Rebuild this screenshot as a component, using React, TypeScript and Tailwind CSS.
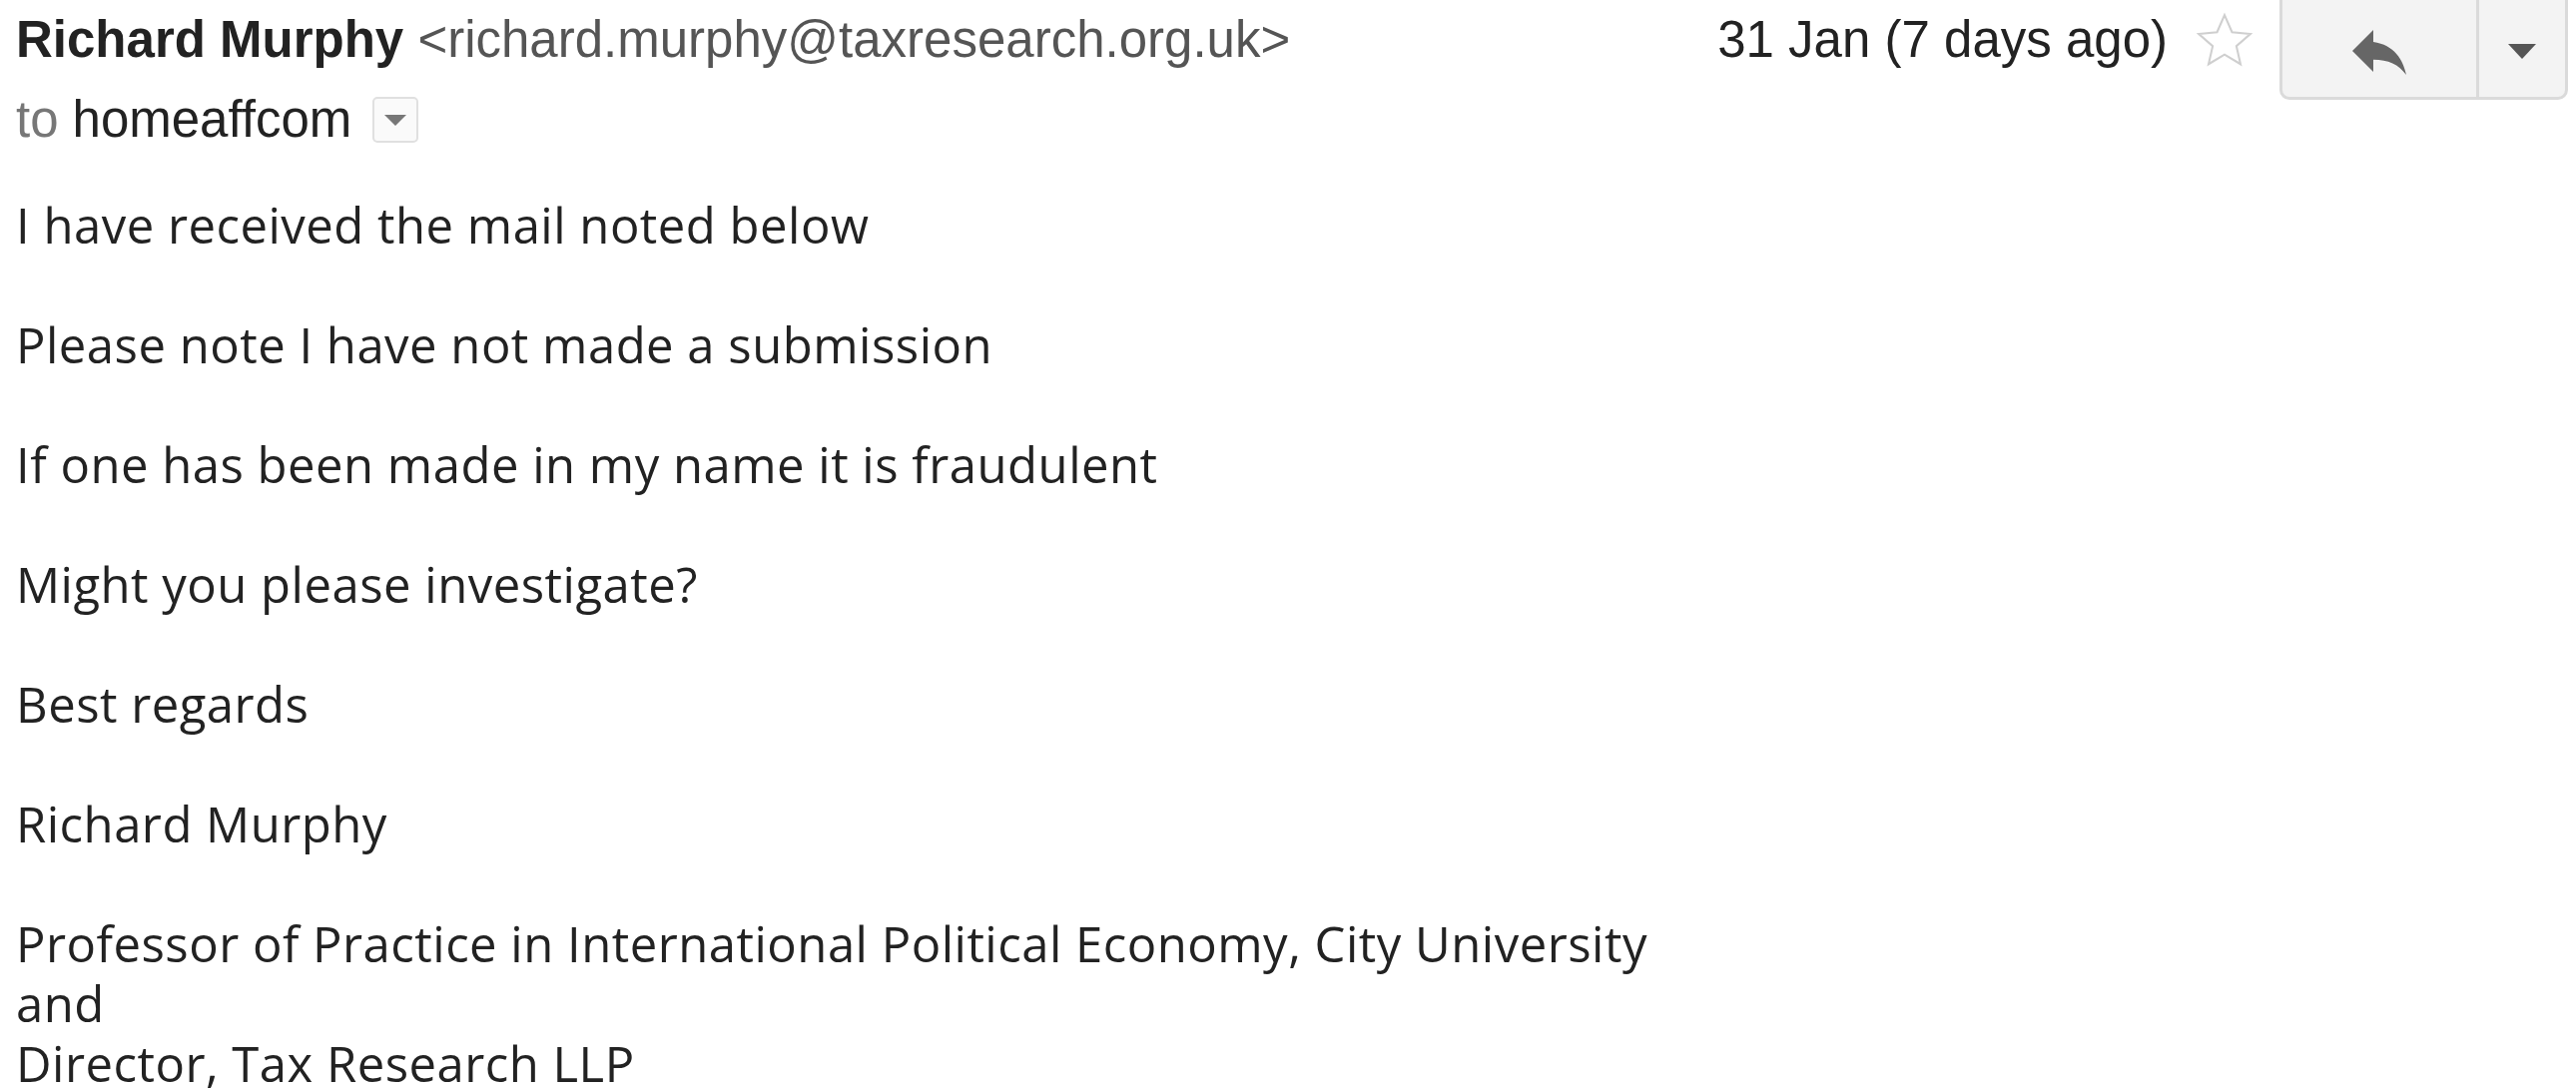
import React from "react";

// Gmail-style single message view (zoomed screenshot)
function Star() {
  return (
    <svg width="62" height="62" viewBox="0 0 24 24" className="shrink-0">
      <polygon
        points="12,2 14.9,8.6 22,9.3 16.6,14 18.2,21 12,17.3 5.8,21 7.4,14 2,9.3 9.1,8.6"
        fill="none"
        stroke="#cfcfcf"
        strokeWidth="0.8"
        strokeLinejoin="miter"
      />
    </svg>
  );
}

function ReplyIcon() {
  return (
    <svg width="72" height="72" viewBox="0 0 24 24">
      <path d="M10 9V5l-7 7 7 7v-4.1c5 0 8.5 1.6 11 5.1-1-5-4-10-11-11z" fill="#666" />
    </svg>
  );
}

const body: string[][] = [
  ["I have received the mail noted below"],
  ["Please note I have not made a submission"],
  ["If one has been made in my name it is fraudulent"],
  ["Might you please investigate?"],
  ["Best regards"],
  ["Richard Murphy"],
  [
    "Professor of Practice in International Political Economy, City University",
    "and",
    "Director, Tax Research LLP",
  ],
];

export default function App() {
  return (
    <div className="min-h-screen overflow-hidden bg-white">
      <div className="flex items-start justify-between pl-[16px] pr-[8px] font-['Liberation_Sans',Arial,sans-serif] text-[51px]">
        <div className="flex flex-col">
          <div className="whitespace-nowrap leading-[80px]">
            <span className="font-bold text-[#222]">Richard Murphy</span>{" "}
            <span className="text-[#555]">&lt;richard.murphy@taxresearch.org.uk&gt;</span>
          </div>
          <div className="flex items-center whitespace-nowrap leading-[80px]">
            <span className="text-[#777]">to</span>
            <span className="ml-[14px] text-[#222]">homeaffcom</span>
            <span className="ml-[21px] flex h-[46px] w-[46px] items-center justify-center rounded-[5px] border-2 border-[#e0e0e0] bg-[#fafafa]">
              <span className="h-0 w-0 border-x-[11px] border-t-[11px] border-x-transparent border-t-[#777]" />
            </span>
          </div>
        </div>

        <div className="flex items-start">
          <span className="whitespace-nowrap leading-[80px] text-[#222]">31 Jan (7 days ago)</span>
          <span className="ml-[26px] mt-[10px]">
            <Star />
          </span>
          <div className="-mt-[10px] ml-[24px] flex h-[110px] overflow-hidden rounded-b-[10px] border-[3px] border-[#dadada] bg-[#f3f3f3]">
            <button type="button" className="flex w-[194px] items-center justify-center pt-[12px]">
              <ReplyIcon />
            </button>
            <div className="w-[3px] bg-[#dadada]" />
            <button type="button" className="flex w-[86px] items-center justify-center pt-[12px]">
              <span className="h-0 w-0 border-x-[14px] border-t-[15px] border-x-transparent border-t-[#555]" />
            </button>
          </div>
        </div>
      </div>

      <div className="mt-[35px] pl-[16px] font-['Open_Sans',sans-serif] text-[49px] leading-[60px] tracking-[0.5px] text-[#222]">
        {body.map((p, i) => (
          <p key={i} className="mb-[60px] whitespace-nowrap last:mb-0">
            {p.map((line, j) => (
              <React.Fragment key={j}>
                {j > 0 && <br />}
                {line}
              </React.Fragment>
            ))}
          </p>
        ))}
      </div>
    </div>
  );
}
